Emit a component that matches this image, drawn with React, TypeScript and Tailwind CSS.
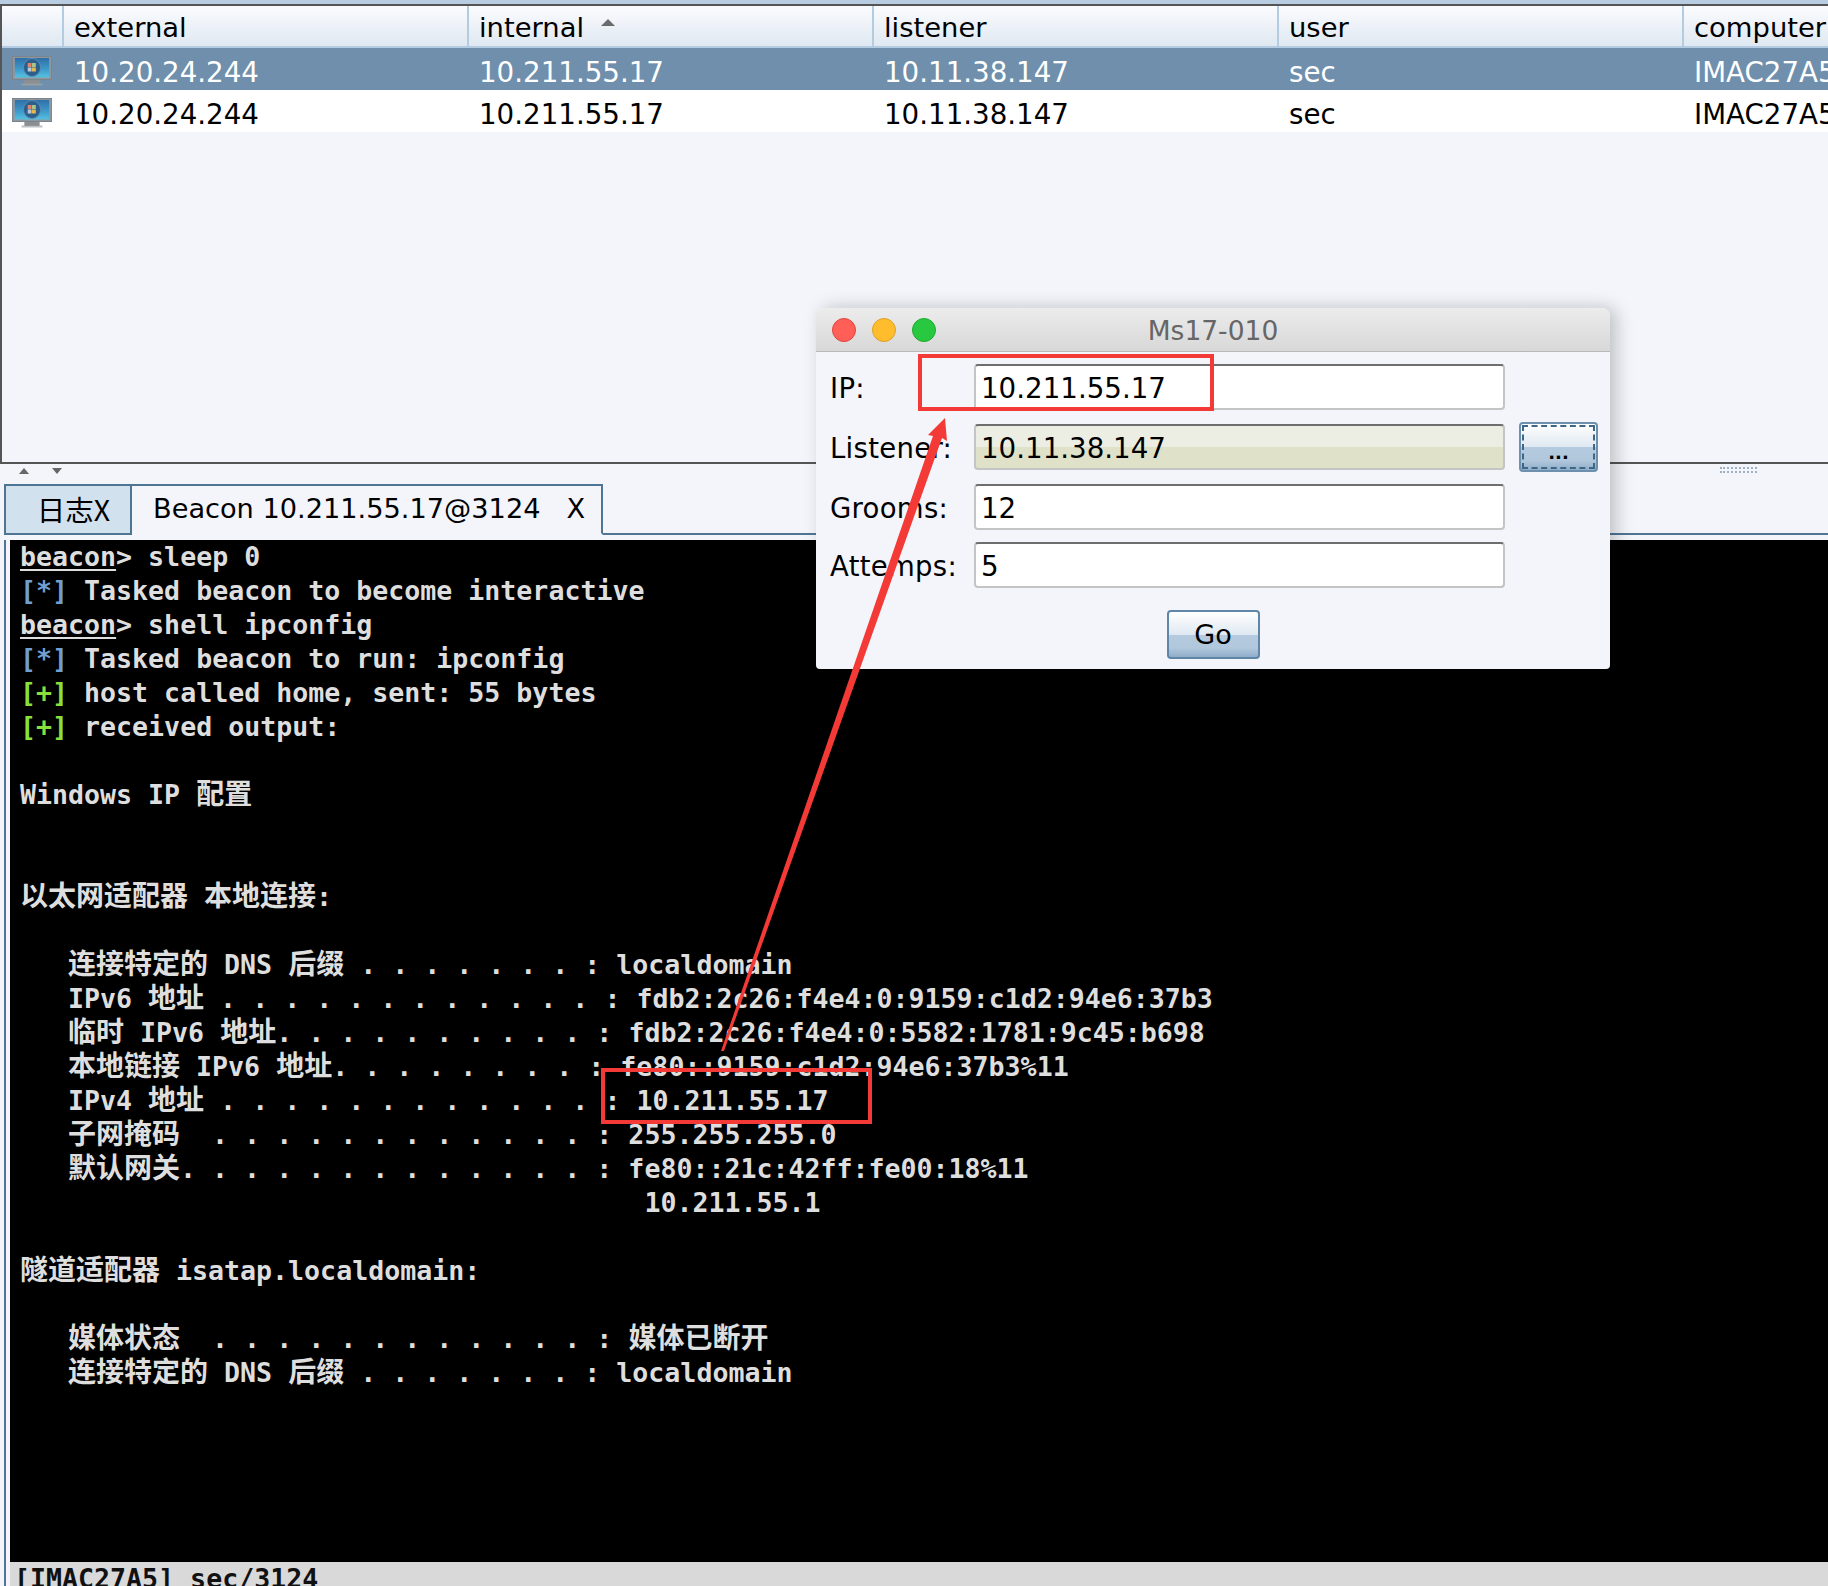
import React from "react";

const MONO = "font-['DejaVu_Sans_Mono','Noto_Sans_CJK_SC',monospace]";

function Cjk({ text }: { text: string }) {
  const parts = text.split(/([\u4e00-\u9fff]+)/);
  return (
    <>
      {parts.map((p, i) =>
        /[\u4e00-\u9fff]/.test(p) ? (
          <span key={i} className="text-[28px] leading-[0] font-['Noto_Sans_CJK_SC',sans-serif] font-bold">
            {p}
          </span>
        ) : (
          <span key={i}>{p}</span>
        )
      )}
    </>
  );
}

function Line({ children }: { children?: React.ReactNode }) {
  return <div className="h-[34px] leading-[34px] whitespace-pre">{children}</div>;
}

function Prompt({ cmd }: { cmd: string }) {
  return (
    <Line>
      <span className="underline underline-offset-[3px]">beacon</span>&gt; {cmd}
    </Line>
  );
}

function Tag({ kind, children }: { kind: "*" | "+"; children: React.ReactNode }) {
  return (
    <Line>
      <span className={kind === "*" ? "text-[#6f9fd2]" : "text-[#88e03c]"}>[{kind}]</span> {children}
    </Line>
  );
}

function MonitorIcon() {
  return (
    <svg width="40" height="30" viewBox="0 0 42 30" preserveAspectRatio="none" className="block">
      <defs>
        <linearGradient id="scr" x1="0" y1="0" x2="0" y2="1">
          <stop offset="0" stopColor="#2f6fa8" />
          <stop offset="0.6" stopColor="#3f9ccb" />
          <stop offset="1" stopColor="#55c2e2" />
        </linearGradient>
      </defs>
      <rect x="0.5" y="0.5" width="41" height="23" fill="#8f979e" stroke="#7c858d" />
      <rect x="3" y="2" width="36" height="19.5" fill="url(#scr)" />
      <rect x="13" y="24" width="16" height="4" fill="#8c8f92" />
      <rect x="10" y="27.5" width="22" height="2" fill="#a3a6a8" opacity="0.7" />
      <circle cx="21" cy="11.5" r="9" fill="#2c5f8c" stroke="#5a8cb4" />
      <rect x="16.5" y="7" width="4" height="4" fill="#e0866c" />
      <rect x="21" y="7" width="4" height="4" fill="#a8c48a" />
      <rect x="16.5" y="11.5" width="4" height="4" fill="#bcc9d8" />
      <rect x="21" y="11.5" width="4" height="4" fill="#e8b84a" />
    </svg>
  );
}

const columns = ["external", "internal", "listener", "user", "computer"];
const values = ["10.20.24.244", "10.211.55.17", "10.11.38.147", "sec", "IMAC27A5"];

function Row({ selected }: { selected?: boolean }) {
  return (
    <div
      className={`flex h-[42px] items-center ${selected ? "bg-[#6f8fac] text-white" : "bg-white text-black"}`}
    >
      <div className="w-[62px] shrink-0 pl-[10px] pt-[3px]">
        <MonitorIcon />
      </div>
      {values.map((v, i) => (
        <div
          key={v + i}
          className="w-[405px] shrink-0 pl-[10px] pt-[8px] text-[27.7px] leading-[36px] whitespace-nowrap"
        >
          {v}
        </div>
      ))}
    </div>
  );
}

function Field({ label, value, active }: { label: string; value: string; active?: boolean }) {
  return (
    <div className="flex h-[46px] items-center">
      <div className="w-[158px] shrink-0 pl-[14px] pt-[4px] text-[27.5px] tracking-[0.3px] text-black whitespace-nowrap">{label}</div>
      <div
        className={`h-[46px] w-[531px] shrink-0 rounded-[4px] border-2 border-[#c4c4c4] border-t-[#6e6e6e] pl-[5px] pt-[2px] text-[27.7px] leading-[42px] text-black ${
          active
            ? "bg-[linear-gradient(#edeee3_0%,#edeee3_50%,#dfe1c9_50%,#dfe1c9_100%)] border-[#bcbdac] border-t-[#6e6e5e]"
            : "bg-white"
        }`}
      >
        {value}
      </div>
    </div>
  );
}

const glossy =
  "bg-[linear-gradient(#ffffff_0%,#dfe8f1_50%,#b4cadf_50%,#b0c7dc_80%,#8fadc9_100%)]";

export default function App() {
  return (
    <div className="relative flex h-[1586px] w-[1828px] flex-col overflow-hidden bg-[#f3f5fa] font-['DejaVu_Sans',sans-serif]">
      <div className="h-[4px] shrink-0 bg-[#b9cde2]" />

      {/* Sessions table */}
      <div className="h-[460px] shrink-0 overflow-hidden border-y-2 border-l-2 border-[#555555] bg-[#f3f5fa]">
        <div className="flex h-[42px] border-b-2 border-[#b3cce2] bg-[linear-gradient(#fbfcfe,#dfe8f1)] text-[27.4px] text-black">
          <div className="w-[62px] shrink-0 border-r-2 border-[#b3cce2]" />
          {columns.map((c) => (
            <div
              key={c}
              className="flex h-[40px] w-[405px] shrink-0 items-center gap-[16px] border-r-2 border-[#b3cce2] pl-[10px] pt-[4px] leading-[36px]"
            >
              {c}
              {c === "internal" && (
                <svg width="16" height="8" viewBox="0 0 16 8" className="mb-[10px]">
                  <path d="M8 0 L15 7 L1 7 Z" fill="#6b6b6b" />
                </svg>
              )}
            </div>
          ))}
        </div>
        <Row selected />
        <Row />
      </div>

      {/* Split pane handle */}
      <div className="relative flex h-[20px] shrink-0 items-start gap-[21px] pl-[18px] pt-[4px]">
        <svg width="12" height="7" viewBox="0 0 12 7">
          <path d="M6 0 L11 6 L1 6 Z" fill="#666666" />
        </svg>
        <svg width="12" height="7" viewBox="0 0 12 7">
          <path d="M1 0 L11 0 L6 6 Z" fill="#666666" />
        </svg>
        <div className="absolute left-[1720px] top-[3px] h-[6px] w-[37px] border-y-2 border-dotted border-[#9db1c6]" />
      </div>

      {/* Tabs */}
      <div className="flex h-[51px] shrink-0 items-end pl-[4px]">
        <div className="flex h-[51px] w-[128px] shrink-0 items-center justify-end border-2 border-[#4f7594] bg-[#d2e1ee] pr-[20px] text-[28.5px] text-black font-['Noto_Sans_CJK_SC',sans-serif]">
          日志X
        </div>
        <div className="flex h-[51px] w-[471px] shrink-0 items-center border-y-2 border-r-2 border-b-transparent border-[#4f7594] bg-[#f3f5fa] pl-[21px] text-[27.2px] whitespace-pre text-black">
          Beacon 10.211.55.17@3124{"   "}X
        </div>
        <div className="h-[2px] grow bg-[#4f7594]" />
      </div>

      {/* Console */}
      <div className="flex min-h-0 grow pl-[4px] pt-[5px]">
        <div className="w-[6px] shrink-0 border-l-2 border-[#4f7594]" />
        <div className="flex min-w-0 grow flex-col">
          <div className={`min-h-0 grow overflow-hidden bg-black pl-[10px] text-[26.6px] font-bold text-[#dedede] ${MONO}`}>
            <Prompt cmd="sleep 0" />
            <Tag kind="*">Tasked beacon to become interactive</Tag>
            <Prompt cmd="shell ipconfig" />
            <Tag kind="*">Tasked beacon to run: ipconfig</Tag>
            <Tag kind="+">host called home, sent: 55 bytes</Tag>
            <Tag kind="+">received output:</Tag>
            <Line />
            <Line><Cjk text="Windows IP 配置" /></Line>
            <Line />
            <Line />
            <Line><Cjk text="以太网适配器 本地连接:" /></Line>
            <Line />
            <Line><Cjk text="   连接特定的 DNS 后缀 . . . . . . . : localdomain" /></Line>
            <Line><Cjk text="   IPv6 地址 . . . . . . . . . . . . : fdb2:2c26:f4e4:0:9159:c1d2:94e6:37b3" /></Line>
            <Line><Cjk text="   临时 IPv6 地址. . . . . . . . . . : fdb2:2c26:f4e4:0:5582:1781:9c45:b698" /></Line>
            <Line><Cjk text="   本地链接 IPv6 地址. . . . . . . . : fe80::9159:c1d2:94e6:37b3%11" /></Line>
            <Line><Cjk text="   IPv4 地址 . . . . . . . . . . . . : 10.211.55.17" /></Line>
            <Line><Cjk text="   子网掩码  . . . . . . . . . . . . : 255.255.255.0" /></Line>
            <Line><Cjk text="   默认网关. . . . . . . . . . . . . : fe80::21c:42ff:fe00:18%11" /></Line>
            <Line>{"                                       10.211.55.1"}</Line>
            <Line />
            <Line><Cjk text="隧道适配器 isatap.localdomain:" /></Line>
            <Line />
            <Line><Cjk text="   媒体状态  . . . . . . . . . . . . : 媒体已断开" /></Line>
            <Line><Cjk text="   连接特定的 DNS 后缀 . . . . . . . : localdomain" /></Line>
          </div>
          <div className={`h-[24px] shrink-0 overflow-hidden bg-[#d9d9d9] pl-[4px] text-[26.6px] leading-[34px] font-bold whitespace-pre text-[#111111] ${MONO}`}>
            [IMAC27A5] sec/3124
          </div>
        </div>
      </div>

      {/* Ms17-010 dialog window */}
      <div className="absolute left-[816px] top-[308px] h-[361px] w-[794px] overflow-hidden rounded-t-[8px] rounded-b-[4px] bg-[#f3f5fa] shadow-[6px_0_18px_rgba(0,0,0,0.22)]">
        <div className="relative flex h-[44px] items-center justify-center border-b border-[#b9b9b9] bg-[linear-gradient(#ececec,#d8d8d8)] pt-[3px] text-[26.5px] text-[#666666]">
          <div className="absolute left-[16px] top-[10px] flex gap-[16px]">
            <span className="h-[24px] w-[24px] rounded-full border border-[#e0443e] bg-[#ff5f57]" />
            <span className="h-[24px] w-[24px] rounded-full border border-[#dea123] bg-[#ffbd2e]" />
            <span className="h-[24px] w-[24px] rounded-full border border-[#1aab29] bg-[#28c940]" />
          </div>
          Ms17-010
        </div>
        <div className="flex flex-col pt-[12px]">
          <div className="mb-[14px]">
            <Field label="IP:" value="10.211.55.17" />
          </div>
          <div className="mb-[14px] flex h-[46px] items-center gap-[14px]">
            <Field label="Listener:" value="10.11.38.147" active />
            <button className={`flex h-[50px] w-[79px] shrink-0 items-end justify-center rounded-[4px] border-2 border-[#6c90ae] pb-[8px] text-[18px] leading-[18px] font-bold text-black outline-dashed outline-2 -outline-offset-5 outline-[#3f6685] ${glossy}`}>
              ...
            </button>
          </div>
          <div className="mb-[12px]">
            <Field label="Grooms:" value="12" />
          </div>
          <Field label="Attemps:" value="5" />
          <div className="flex justify-center pt-[22px]">
            <button className={`h-[49px] w-[93px] rounded-[4px] border-2 border-[#5f86a6] pt-[2px] text-[27px] text-black ${glossy}`}>
              Go
            </button>
          </div>
        </div>
      </div>

      {/* Red annotations */}
      <div className="absolute left-[918px] top-[354px] h-[57px] w-[296px] border-4 border-[#f43a36]" />
      <div className="absolute left-[601px] top-[1068px] h-[56px] w-[271px] border-4 border-[#f43a36]" />
      <svg className="absolute left-0 top-0" width="1828" height="1586" viewBox="0 0 1828 1586">
        <path
          d="M945 418 L947 441 L942 438 L724 1051 L721 1051 L933 436 L928 435 Z"
          fill="#f43a36"
        />
      </svg>
    </div>
  );
}
